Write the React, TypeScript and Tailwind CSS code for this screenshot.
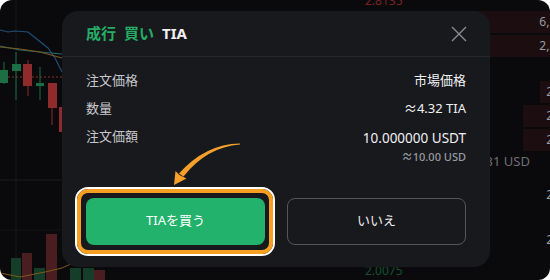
import React from "react";

const asks = [
  { w: "w-[160px]", text: "6,120" },
  { w: "w-[160px]", text: "2,240" },
];
const asks2 = [
  { w: "w-[10px]", text: "2" },
  { w: "w-[27px]", text: "2" },
  { w: "w-[27px]", text: "2" },
];

function Chart() {
  return (
    <svg width="330" height="280" viewBox="0 0 330 280" className="shrink-0">
      <line x1="16" y1="0" x2="16" y2="280" stroke="#16171b" />
      <line x1="0" y1="180" x2="330" y2="180" stroke="#1c1c1f" />
      <line x1="0" y1="230" x2="330" y2="230" stroke="#141418" />
      <line x1="0" y1="77" x2="70" y2="77" stroke="#8a2b2e" strokeDasharray="2 2" />
      <path d="M0 30 L8 32 L15 31 L28 32 L38 40 L48 48 L55 58 L62 72" stroke="#1d4f7a" strokeWidth="1.2" fill="none" />
      <path d="M0 46 L20 50 L40 52 L62 54" stroke="#1f6670" strokeWidth="1.2" fill="none" />
      <path d="M0 47 L20 49 L40 52 L62 58" stroke="#7a5a1c" strokeWidth="1.2" fill="none" />
      {/* candles */}
      <line x1="4" y1="62" x2="4" y2="84" stroke="#1d6e44" />
      <rect x="0" y="70" width="8" height="13" fill="#1d6e44" />
      <line x1="16" y1="52" x2="16" y2="100" stroke="#1d6e44" />
      <rect x="12" y="64" width="9" height="7" fill="#1d6e44" />
      <line x1="28" y1="60" x2="28" y2="96" stroke="#8f2a2d" />
      <rect x="23" y="64" width="9" height="22" fill="#8f2a2d" />
      <line x1="40" y1="67" x2="40" y2="100" stroke="#1d6e44" />
      <rect x="36" y="83" width="8" height="3" fill="#1d6e44" />
      <line x1="52" y1="83" x2="52" y2="125" stroke="#8f2a2d" />
      <rect x="48" y="83" width="9" height="25" fill="#8f2a2d" />
      <rect x="59" y="107" width="4" height="25" fill="#8f2a2d" />
      {/* volume */}
      <rect x="11" y="258" width="10" height="22" fill="#153d2a" />
      <rect x="22" y="253" width="10" height="27" fill="#4a1d20" />
      <rect x="34" y="268" width="11" height="12" fill="#153d2a" />
      <rect x="46" y="234" width="11" height="46" fill="#4a1d20" />
      <rect x="70" y="268" width="11" height="12" fill="#153d2a" />
      <rect x="83" y="268" width="11" height="12" fill="#153d2a" />
      <rect x="94" y="270" width="11" height="10" fill="#4a1d20" />
      <path d="M0 273 L20 277 L45 272 L62 268 L75 262" stroke="#7a5a1c" strokeWidth="1" fill="none" />
    </svg>
  );
}

function OrderBook() {
  return (
    <div className="flex-1 flex flex-col text-[12px] text-[#9a9ba0]">
      <div className="h-[11px] flex items-end pl-[35px] text-[#7a2326] leading-none">
        <span className="-translate-y-[4px]">2.8135</span>
      </div>
      <div className="flex flex-col gap-[2px]">
        {asks.map((r, i) => (
          <div key={i} className="h-[22px] flex justify-end">
            <div className={`${r.w} h-full bg-[#1c0e10] flex items-center justify-end`}>
              <span className="translate-x-[20px]">{r.text}</span>
            </div>
          </div>
        ))}
      </div>
      <div className="flex flex-col gap-[2px] mt-[24px]">
        {asks2.map((r, i) => (
          <div key={i} className="h-[22px] flex justify-end">
            <div className={`${r.w} h-full bg-[#1c0e10] flex items-center justify-end`}>
              <span className="translate-x-[3px]">{r.text}</span>
            </div>
          </div>
        ))}
      </div>
      <div className="h-[22px] flex items-center justify-end pr-[20px] text-[#6e6f74] text-[13px]">
        2.631 USD
      </div>
      <div className="h-[46px] flex items-center justify-end text-[#a0a1a6]">
        <span className="translate-x-[3px]">2</span>
      </div>
      <div className="h-[46px] flex items-center justify-end text-[#a0a1a6]">
        <span className="translate-x-[3px]">2</span>
      </div>
      <div className="pl-[35px] text-[#16502f]">2.0075</div>
    </div>
  );
}

function Arrow() {
  return (
    <svg width="550" height="280" className="absolute left-0 top-0 pointer-events-none">
      <path d="M240 143.4 Q205 144 179 173.5 L183.5 176.5 Q207 147 240 144.6 Z" fill="#f5a02a" />
      <path d="M174 185 L186.5 178.5 L179.5 175 L175.5 171 Z" fill="#f5a02a" />
    </svg>
  );
}

export default function App() {
  return (
    <div className="w-[550px] h-[280px] bg-white" style={{ fontFamily: '"Noto Sans", "Noto Sans CJK JP", sans-serif' }}>
      <div className="relative w-full h-full rounded-[12px] bg-[#0a0a0d] overflow-hidden flex">
        <Chart />
        <OrderBook />

        <div className="absolute left-[62px] top-[11px] w-[428px] h-[256px] rounded-[16px] bg-[#18191d] flex flex-col">
          <div className="h-[46px] flex items-center justify-between px-6 border-b border-[#26272c]">
            <div className="flex items-center gap-[8px] text-[15px] font-bold">
              <span className="text-[#25ad67]">成行</span>
              <span className="text-[#25ad67]">買い</span>
              <span className="text-[#f0f0f2]">TIA</span>
            </div>
            <svg width="16" height="16" viewBox="0 0 16 16" className="mr-[-1px]">
              <path d="M1 1 L15 15 M15 1 L1 15" stroke="#8b8c91" strokeWidth="1.4" />
            </svg>
          </div>

          <div className="px-6 pt-[14px] flex flex-col text-[13px]">
            <div className="h-[20px] flex items-center justify-between">
              <span className="text-[#c6c7cb]">注文価格</span>
              <span className="text-[#f0f0f2]">市場価格</span>
            </div>
            <div className="h-[20px] mt-[8px] flex items-center justify-between">
              <span className="text-[#c6c7cb]">数量</span>
              <span className="text-[#f0f0f2]">≈4.32 TIA</span>
            </div>
            <div className="h-[20px] mt-[8px] flex items-center justify-between">
              <span className="text-[#c6c7cb]">注文価額</span>
              <span className="text-[#f0f0f2] text-[13.5px] translate-y-[1px]">10.000000 USDT</span>
            </div>
            <div className="flex justify-end text-[11px] font-medium text-[#9a9ba0] mt-[2px]">≈10.00 USD</div>
          </div>

          <div className="px-6 mt-[32px] grid grid-cols-2 gap-[22px]">
            <div className="relative">
              <div className="absolute -left-[11px] -top-[11px] -right-[10px] -bottom-[11px] rounded-[13px] border-2 border-white">
                <div className="w-full h-full rounded-[11px] border-4 border-[#f5a023]" />
              </div>
              <button className="relative w-full h-[47px] rounded-[8px] bg-[#22b26c] text-white text-[13px] flex items-center justify-center">
                TIAを買う
              </button>
            </div>
            <button className="w-full h-[47px] rounded-[8px] border border-[#55565b] text-[#eeeef0] text-[13px] flex items-center justify-center">
              いいえ
            </button>
          </div>
        </div>

        <Arrow />
      </div>
    </div>
  );
}
